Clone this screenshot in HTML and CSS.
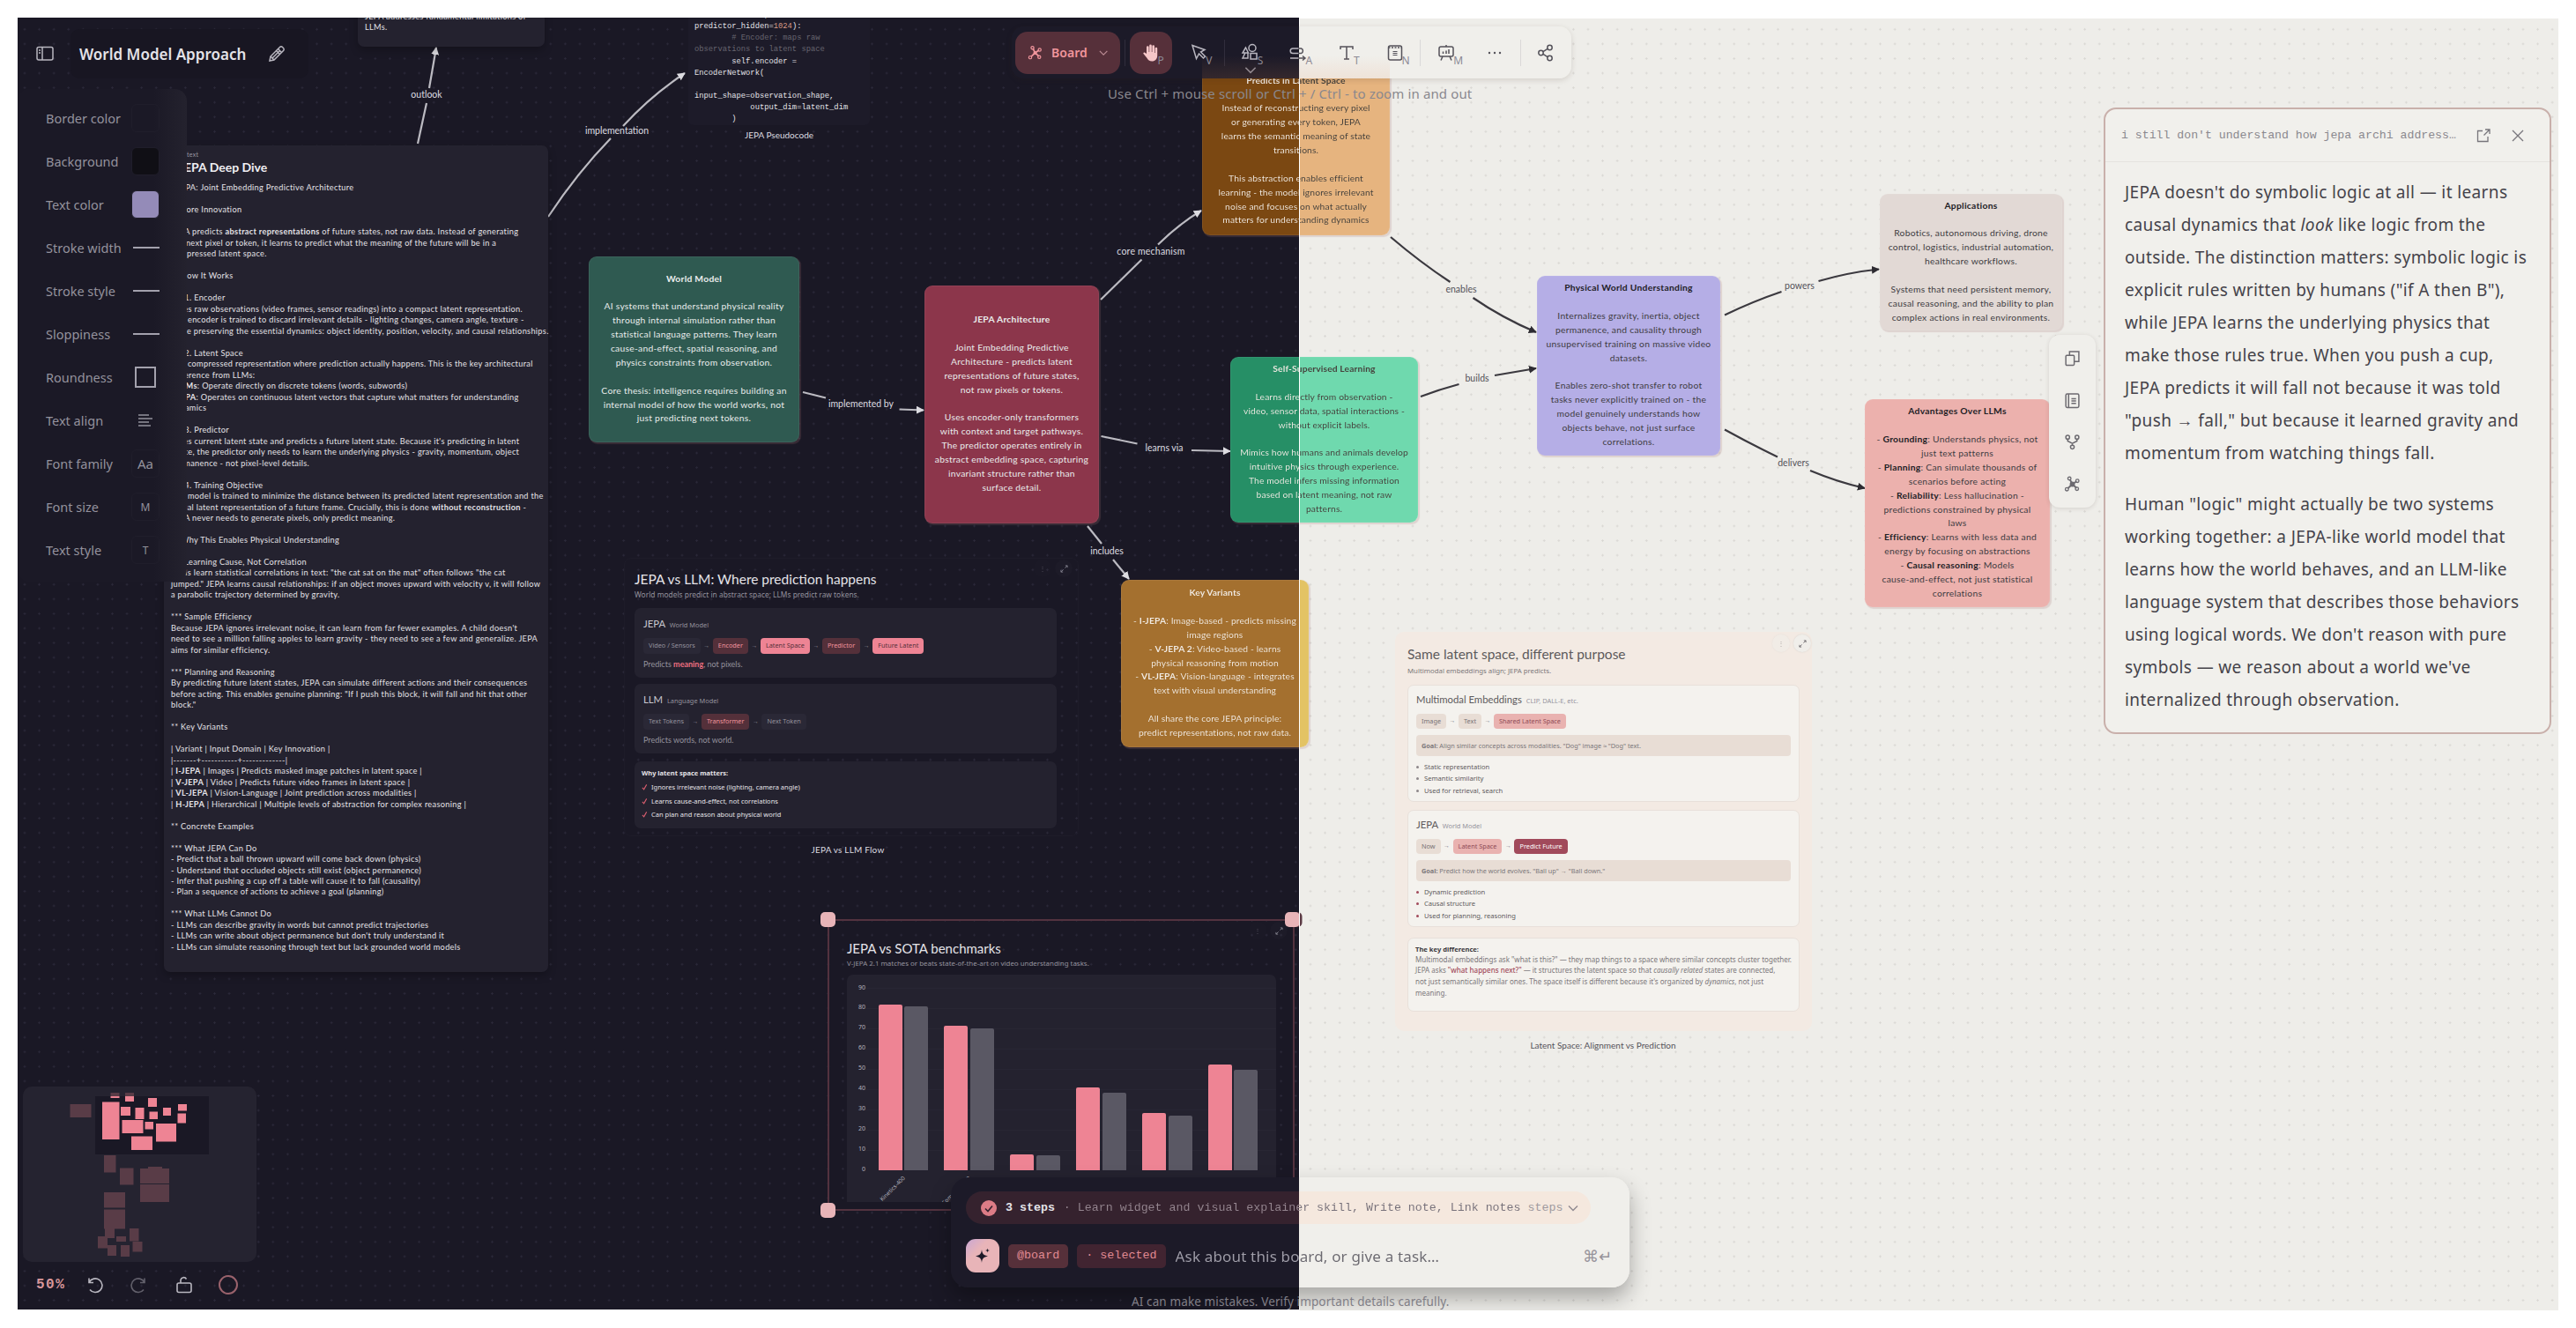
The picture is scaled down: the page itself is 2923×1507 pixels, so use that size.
FILE: index.html
```html
<!DOCTYPE html>
<html lang="en">
<head>
  <meta charset="UTF-8" />
  <meta name="viewport" content="width=device-width, initial-scale=1.0"/>
  <title>World Model Approach</title>
  <link rel="stylesheet" href="styles.css">
</head>
<body>

  <!-- shared icons -->
  <svg class="defs" width="0" height="0">
    <symbol id="i-board" viewBox="0 0 20 20">
      <path d="M10 10 7 4M10 10l5-3.500M10 10l-5.500 5M10 10l5 4.500" fill="none" stroke="currentColor" stroke-width="2"/>
      <circle cx="10" cy="10" r="2.400" fill="currentColor"/>
      <circle cx="6.500" cy="3.200" r="1.900" fill="none" stroke="currentColor" stroke-width="1.400"/>
      <circle cx="16" cy="6" r="1.900" fill="none" stroke="currentColor" stroke-width="1.400"/>
      <circle cx="3.500" cy="16" r="1.900" fill="none" stroke="currentColor" stroke-width="1.400"/>
      <circle cx="15.500" cy="15.500" r="1.900" fill="none" stroke="currentColor" stroke-width="1.400"/>
    </symbol>
    <symbol id="i-chevron" viewBox="0 0 12 8">
      <path d="M1 1.500 6 6.500l5-5" fill="none" stroke="currentColor" stroke-width="1.400"/>
    </symbol>
    <symbol id="i-expand" viewBox="0 0 10 10">
      <path d="M6 4 9 1M6.500 1H9v2.500M4 6 1 9M1 6.500V9h2.500" fill="none" stroke="currentColor" stroke-width="1"/>
    </symbol>
    <symbol id="i-check" viewBox="0 0 8 8">
      <path d="M1 5l2 2.200L6.500 1" fill="none" stroke="currentColor" stroke-width="1.200"/>
    </symbol>
  </svg>

  <div class="canvas">
    <div class="side dark"></div>
    <div class="side light"></div>

    <!-- connectors -->
    <svg class="edges" width="2923" height="1507">
      <defs>
        <marker id="head-d" viewBox="0 0 10 10" refX="9" refY="5" markerWidth="9" markerHeight="9" markerUnits="userSpaceOnUse" orient="auto"><path d="M0 0 10 5 0 10z" fill="#dddce1"/></marker>
        <marker id="head-l" viewBox="0 0 10 10" refX="9" refY="5" markerWidth="9" markerHeight="9" markerUnits="userSpaceOnUse" orient="auto"><path d="M0 0 10 5 0 10z" fill="#2d2b31"/></marker>
      </defs>
      <g class="edge-dark">
        <path d="M474 163 484 117"/>
        <path d="M487 100 495 54" marker-end="url(#head-d)"/>
        <path d="M622 246Q655 196 693 157"/>
        <path d="M707 143Q738 109 777 83" marker-end="url(#head-d)"/>
        <path d="M911 445 937 451.500"/>
        <path d="M1020.500 464.500 1048 465.500" marker-end="url(#head-d)"/>
        <path d="M1249 340 1295.500 294.500"/>
        <path d="M1314 277.500Q1338 254 1363 239" marker-end="url(#head-d)"/>
        <path d="M1249.500 495 1290.500 503.500"/>
        <path d="M1352 511 1396 512" marker-end="url(#head-d)"/>
        <path d="M1234 597 1250 617"/>
        <path d="M1263 635 1281 657" marker-end="url(#head-d)"/>
      </g>
      <g class="edge-light">
        <path d="M1578 269Q1612 298 1645.500 320"/>
        <path d="M1671.500 338Q1705 361 1743 377" marker-end="url(#head-l)"/>
        <path d="M1612 450Q1633 442 1655.500 436"/>
        <path d="M1696 426 1743 418" marker-end="url(#head-l)"/>
        <path d="M1957 357.500Q1989 342 2021.500 331"/>
        <path d="M2063.500 319Q2098 309 2132 305.500" marker-end="url(#head-l)"/>
        <path d="M1957 487.500Q1987 504 2017 518.500"/>
        <path d="M2054 534Q2085 547 2116 554" marker-end="url(#head-l)"/>
      </g>
    </svg>
    <span class="edge-label" id="e-outlook">outlook</span>
    <span class="edge-label" id="e-implementation">implementation</span>
    <span class="edge-label" id="e-implemented">implemented by</span>
    <span class="edge-label" id="e-core">core mechanism</span>
    <span class="edge-label" id="e-learns">learns via</span>
    <span class="edge-label" id="e-includes">includes</span>
    <span class="edge-label ink" id="e-enables">enables</span>
    <span class="edge-label ink" id="e-builds">builds</span>
    <span class="edge-label ink" id="e-powers">powers</span>
    <span class="edge-label ink" id="e-delivers">delivers</span>

    <div class="note" id="n-outlook">JEPA addresses fundamental limitations of<br>LLMs.</div>

    <pre class="code">observation_dim,
predictor_hidden=<i>1024</i>):
        <em># Encoder: maps raw</em>
<em>observations to latent space</em>
        self.encoder =
EncoderNetwork(

input_shape=observation_shape,
            output_dim=latent_dim
        )</pre>
    <span class="caption" id="c-code">JEPA Pseudocode</span>

    <article class="note" id="n-deep">
      <small>text</small>
      <h2>* JEPA Deep Dive</h2>
      <div class="lines">* JEPA: Joint Embedding Predictive Architecture

** Core Innovation

JEPA predicts <b>abstract representations</b> of future states, not raw data. Instead of generating
the next pixel or token, it learns to predict what the meaning of the future will be in a
compressed latent space.

** How It Works

*** 1. Encoder
Takes raw observations (video frames, sensor readings) into a compact latent representation.
The encoder is trained to discard irrelevant details - lighting changes, camera angle, texture -
while preserving the essential dynamics: object identity, position, velocity, and causal relationships.

*** 2. Latent Space
The compressed representation where prediction actually happens. This is the key architectural
difference from LLMs:
- <b>LLMs</b>: Operate directly on discrete tokens (words, subwords)
- <b>JEPA</b>: Operates on continuous latent vectors that capture what matters for understanding
dynamics

*** 3. Predictor
Takes current latent state and predicts a future latent state. Because it's predicting in latent
space, the predictor only needs to learn the underlying physics - gravity, momentum, object
permanence - not pixel-level details.

*** 4. Training Objective
The model is trained to minimize the distance between its predicted latent representation and the
actual latent representation of a future frame. Crucially, this is done <b>without reconstruction</b> -
JEPA never needs to generate pixels, only predict meaning.

** Why This Enables Physical Understanding

*** Learning Cause, Not Correlation
LLMs learn statistical correlations in text: "the cat sat on the mat" often follows "the cat
jumped." JEPA learns causal relationships: if an object moves upward with velocity v, it will follow
a parabolic trajectory determined by gravity.

*** Sample Efficiency
Because JEPA ignores irrelevant noise, it can learn from far fewer examples. A child doesn't
need to see a million falling apples to learn gravity - they need to see a few and generalize. JEPA
aims for similar efficiency.

*** Planning and Reasoning
By predicting future latent states, JEPA can simulate different actions and their consequences
before acting. This enables genuine planning: "If I push this block, it will fall and hit that other
block."

** Key Variants

| Variant | Input Domain | Key Innovation |
|-------+-----------+-------------|
| <b>I-JEPA</b> | Images | Predicts masked image patches in latent space |
| <b>V-JEPA</b> | Video | Predicts future video frames in latent space |
| <b>VL-JEPA</b> | Vision-Language | Joint prediction across modalities |
| <b>H-JEPA</b> | Hierarchical | Multiple levels of abstraction for complex reasoning |

** Concrete Examples

*** What JEPA Can Do
- Predict that a ball thrown upward will come back down (physics)
- Understand that occluded objects still exist (object permanence)
- Infer that pushing a cup off a table will cause it to fall (causality)
- Plan a sequence of actions to achieve a goal (planning)

*** What LLMs Cannot Do
- LLMs can describe gravity in words but cannot predict trajectories
- LLMs can write about object permanence but don't truly understand it
- LLMs can simulate reasoning through text but lack grounded world models</div>
    </article>

    <div class="node" id="n-world"><p><b>World Model</b><br><br>AI systems that understand physical reality<br>through internal simulation rather than<br>statistical language patterns. They learn<br>cause-and-effect, spatial reasoning, and<br>physics constraints from observation.<br><br>Core thesis: intelligence requires building an<br>internal model of how the world works, not<br>just predicting next tokens.</p></div>

    <div class="node" id="n-jepa"><p><b>JEPA Architecture</b><br><br>Joint Embedding Predictive<br>Architecture - predicts latent<br>representations of future states,<br>not raw pixels or tokens.<br><br>Uses encoder-only transformers<br>with context and target pathways.<br>The predictor operates entirely in<br>abstract embedding space, capturing<br>invariant structure rather than<br>surface detail.</p></div>

    <div class="node" id="n-predicts"><p class="split-ink"><b>Predicts in Latent Space</b><br><br>Instead of reconstructing every pixel<br>or generating every token, JEPA<br>learns the semantic meaning of state<br>transitions.<br><br>This abstraction enables efficient<br>learning - the model ignores irrelevant<br>noise and focuses on what actually<br>matters for understanding dynamics</p></div>

    <div class="node" id="n-self"><p class="split-ink"><b>Self-Supervised Learning</b><br><br>Learns directly from observation -<br>video, sensor data, spatial interactions -<br>without explicit labels.<br><br>Mimics how humans and animals develop<br>intuitive physics through experience.<br>The model infers missing information<br>based on latent meaning, not raw<br>patterns.</p></div>

    <div class="node" id="n-variants"><p class="split-ink"><b>Key Variants</b><br><br>- <b>I-JEPA</b>: Image-based - predicts missing<br>image regions<br>- <b>V-JEPA 2</b>: Video-based - learns<br>physical reasoning from motion<br>- <b>VL-JEPA</b>: Vision-language - integrates<br>text with visual understanding<br><br>All share the core JEPA principle:<br>predict representations, not raw data.</p></div>

    <div class="node ink" id="n-physical"><p><b>Physical World Understanding</b><br><br>Internalizes gravity, inertia, object<br>permanence, and causality through<br>unsupervised training on massive video<br>datasets.<br><br>Enables zero-shot transfer to robot<br>tasks never explicitly trained on - the<br>model genuinely understands how<br>objects behave, not just surface<br>correlations.</p></div>

    <div class="node ink" id="n-apps"><p><b>Applications</b><br><br>Robotics, autonomous driving, drone<br>control, logistics, industrial automation,<br>healthcare workflows.<br><br>Systems that need persistent memory,<br>causal reasoning, and the ability to plan<br>complex actions in real environments.</p></div>

    <div class="node ink" id="n-adv"><p><b>Advantages Over LLMs</b><br><br>- <b>Grounding</b>: Understands physics, not<br>just text patterns<br>- <b>Planning</b>: Can simulate thousands of<br>scenarios before acting<br>- <b>Reliability</b>: Less hallucination -<br>predictions constrained by physical<br>laws<br>- <b>Efficiency</b>: Learns with less data and<br>energy by focusing on abstractions<br>- <b>Causal reasoning</b>: Models<br>cause-and-effect, not just statistical<br>correlations</p></div>

    <!-- JEPA vs LLM widget -->
    <section class="widget" id="w-llm">
      <div class="widget-tools"><span>⋮</span><span><svg><use href="#i-expand"/></svg></span></div>
      <h3>JEPA vs LLM: Where prediction happens</h3>
      <p class="sub">World models predict in abstract space; LLMs predict raw tokens.</p>
      <div class="box">
        <h4>JEPA <small>World Model</small></h4>
        <div class="chips"><span class="chip">Video / Sensors</span><i>→</i><span class="chip warm">Encoder</span><i>→</i><span class="chip hot">Latent Space</span><i>→</i><span class="chip warm">Predictor</span><i>→</i><span class="chip hot">Future Latent</span></div>
        <p class="says">Predicts <b>meaning</b>, not pixels.</p>
      </div>
      <div class="box">
        <h4>LLM <small>Language Model</small></h4>
        <div class="chips"><span class="chip">Text Tokens</span><i>→</i><span class="chip warm">Transformer</span><i>→</i><span class="chip">Next Token</span></div>
        <p class="says">Predicts words, not world.</p>
      </div>
      <div class="box why">
        <strong>Why latent space matters:</strong>
        <ul>
          <li><svg><use href="#i-check"/></svg>Ignores irrelevant noise (lighting, camera angle)</li>
          <li><svg><use href="#i-check"/></svg>Learns cause-and-effect, not correlations</li>
          <li><svg><use href="#i-check"/></svg>Can plan and reason about physical world</li>
        </ul>
      </div>
    </section>
    <span class="caption" id="c-llm">JEPA vs LLM Flow</span>

    <!-- latent space widget -->
    <section class="widget pale" id="w-latent">
      <div class="widget-tools"><span>⋮</span><span><svg><use href="#i-expand"/></svg></span></div>
      <h3>Same latent space, different purpose</h3>
      <p class="sub">Multimodal embeddings align; JEPA predicts.</p>
      <div class="box">
        <h4>Multimodal Embeddings <small>CLIP, DALL-E, etc.</small></h4>
        <div class="chips"><span class="chip">Image</span><i>→</i><span class="chip">Text</span><i>→</i><span class="chip pink">Shared Latent Space</span></div>
        <p class="goal"><b>Goal:</b> Align similar concepts across modalities. "Dog" image ≈ "Dog" text.</p>
        <ul><li>Static representation</li><li>Semantic similarity</li><li>Used for retrieval, search</li></ul>
      </div>
      <div class="box second">
        <h4>JEPA <small>World Model</small></h4>
        <div class="chips"><span class="chip">Now</span><i>→</i><span class="chip pink">Latent Space</span><i>→</i><span class="chip wine">Predict Future</span></div>
        <p class="goal"><b>Goal:</b> Predict how the world evolves. "Ball up" → "Ball down."</p>
        <ul><li>Dynamic prediction</li><li>Causal structure</li><li>Used for planning, reasoning</li></ul>
      </div>
      <div class="box key">
        <strong>The key difference:</strong>
        <p>Multimodal embeddings ask "what is this?" — they map things to a space where similar concepts cluster together.<br>JEPA asks <b>"what happens next?"</b> — it structures the latent space so that <em>causally related</em> states are connected,<br>not just semantically similar ones. The space itself is different because it's organized by <em>dynamics</em>, not just<br>meaning.</p>
      </div>
    </section>
    <span class="caption ink" id="c-latent">Latent Space: Alignment vs Prediction</span>

    <!-- benchmark chart -->
    <section class="chart">
      <div class="widget-tools"><span>⋮</span><span><svg><use href="#i-expand"/></svg></span></div>
      <h3>JEPA vs SOTA benchmarks</h3>
      <p class="sub">V-JEPA 2.1 matches or beats state-of-the-art on video understanding tasks.</p>
      <div class="plot">
        <div class="axis"><span>90</span><span>80</span><span>70</span><span>60</span><span>50</span><span>40</span><span>30</span><span>20</span><span>10</span><span>0</span></div>
        <div class="bars">
          <div class="pair"><i style="height:188px"></i><i style="height:186px"></i><em>Kinetics-400</em></div>
          <div class="pair"><i style="height:164px"></i><i style="height:161px"></i><em>Something-v2</em></div>
          <div class="pair"><i style="height:18px"></i><i style="height:17px"></i></div>
          <div class="pair"><i style="height:94px"></i><i style="height:88px"></i></div>
          <div class="pair"><i style="height:65px"></i><i style="height:62px"></i></div>
          <div class="pair"><i style="height:120px"></i><i style="height:114px"></i></div>
        </div>
      </div>
      <b class="handle tl"></b><b class="handle tr"></b><b class="handle bl"></b>
    </section>
    <div class="seam"></div>

    <!-- title bar -->
    <header class="titlebar">
      <svg width="20" height="18" viewBox="0 0 20 18" fill="none" stroke="currentColor" stroke-width="1.500"><rect x="1" y="1.500" width="18" height="14.500" rx="2"/><path d="M7 1.500V16"/><path d="M3 5h2M3 8h2"/></svg>
      <div class="board-name">
        <h1>World Model Approach</h1>
        <svg width="20" height="20" viewBox="0 0 20 20" fill="none" stroke="currentColor" stroke-width="1.500"><path d="M2 18l1-5L13.500 2.500a2 2 0 0 1 3 0l1 1a2 2 0 0 1 0 3L7 17z"/><path d="M11.500 4.500l4 4M9.500 6.500l4 4M4.500 15.500l8.500-8.500M3 13l4 4"/></svg>
      </div>
    </header>

    <!-- style panel -->
    <aside class="props">
      <div><span>Border color</span><i class="swatch"></i></div>
      <div><span>Background</span><i class="swatch black"></i></div>
      <div><span>Text color</span><i class="swatch lilac"></i></div>
      <div><span>Stroke width</span><i class="line"></i></div>
      <div><span>Stroke style</span><i class="line"></i></div>
      <div><span>Sloppiness</span><i class="line"></i></div>
      <div><span>Roundness</span><i class="square"></i></div>
      <div><span>Text align</span><svg width="32" height="16" viewBox="0 0 32 16" stroke="currentColor" stroke-width="1.400"><path d="M8 2h12M8 6h16M8 10h12M8 14h14"/></svg></div>
      <div><span>Font family</span><i class="swatch big">Aa</i></div>
      <div><span>Font size</span><i class="swatch">M</i></div>
      <div><span>Text style</span><i class="swatch">T</i></div>
    </aside>

    <!-- tool bar -->
    <nav class="toolbar">
      <button class="mode"><svg width="20" height="20"><use href="#i-board"/></svg>Board<svg width="12" height="8"><use href="#i-chevron"/></svg></button>
      <hr>
      <button class="tool active"><svg width="24" height="24" viewBox="0 0 24 24" fill="#f6c6c8"><path d="M7 13V5.500a1.300 1.300 0 0 1 2.600 0V11h.6V3.800a1.300 1.300 0 0 1 2.600 0V11h.6V4.500a1.300 1.300 0 0 1 2.600 0V12h.6V7a1.300 1.300 0 0 1 2.600 0v8c0 4-2.500 6.500-6 6.500-3 0-4.500-1.500-6-4L3.500 13c-.7-1.200.8-2.200 1.700-1.200z"/></svg><sub>P</sub></button>
      <button class="tool"><svg width="22" height="22" viewBox="0 0 22 22"><path d="M4 2.500l4.500 15 3-5.500 5 5 2-2-5-5 4.500-2.500z"/></svg><sub>V</sub></button>
      <hr>
      <button class="tool"><svg width="22" height="22" viewBox="0 0 22 22"><circle cx="13" cy="5.500" r="4"/><path d="M5.500 5 2 11h6.500zM5 11l-3 6h6V11"/><rect x="11" y="11.500" width="7" height="6.500"/></svg><sub>S</sub><svg class="more" width="14" height="9"><use href="#i-chevron"/></svg></button>
      <button class="tool"><svg width="24" height="22" viewBox="0 0 24 22"><path d="M12.500 6H6a2.800 2.800 0 0 0 0 5.600h6.500M3 17h9.500"/><path d="M12.500 6h3.500M12.500 11.600h3a3 3 0 0 0 0-5.600M12.500 17h7M17 14.500l3 2.500-3 2.500" stroke="#54525a"/></svg><sub>A</sub></button>
      <button class="tool lt"><svg width="20" height="20" viewBox="0 0 20 20"><path d="M3 6V3h14v3M10 3v14M7 17h6"/></svg><sub>T</sub></button>
      <button class="tool lt"><svg width="20" height="22" viewBox="0 0 20 22"><rect x="2.500" y="3" width="15" height="16" rx="2"/><path d="M2.500 5h15" stroke-dasharray="2 1.500"/><path d="M7.500 9.500h5M7.500 11.500h5M7.500 13.500h5" stroke-width="1"/></svg><sub>N</sub></button>
      <hr>
      <button class="tool lt"><svg width="22" height="22" viewBox="0 0 22 22"><rect x="3" y="4" width="16" height="11" rx="2"/><path d="M11 4V2M7.500 12V9.500M11 12V8.500M14 12V7M7 15l-2 4.500M15 15l2 4.500"/></svg><sub>M</sub></button>
      <button class="tool lt"><svg width="18" height="4" viewBox="0 0 18 4"><g fill="#54525a" stroke="none"><circle cx="3" cy="2" r="1.200"/><circle cx="9" cy="2" r="1.200"/><circle cx="15" cy="2" r="1.200"/></g></svg></button>
      <hr>
      <button class="tool lt"><svg width="20" height="20" viewBox="0 0 20 20"><circle cx="4.500" cy="10" r="2.700"/><circle cx="14.500" cy="4" r="2.700"/><circle cx="14.500" cy="16" r="2.700"/><path d="M7 8.600l5-3.200M7 11.400l5 3.200"/></svg></button>
    </nav>
    <p class="hint">Use Ctrl + mouse scroll or Ctrl + / Ctrl - to zoom in and out</p>

    <!-- node actions -->
    <div class="actions">
      <svg viewBox="0 0 18 18"><rect x="2" y="6" width="9" height="10.500" rx="1"/><path d="M6 6V2h10v10.500h-5"/></svg>
      <svg viewBox="0 0 18 18"><rect x="2" y="2" width="14" height="14.500" rx="1.500"/><path d="M5 2v14.500"/><path d="M8 7h5M8 9.500h5M8 12h5"/></svg>
      <svg viewBox="0 0 18 18"><circle cx="4" cy="4" r="2"/><circle cx="14" cy="4" r="2"/><circle cx="9" cy="14.500" r="2"/><path d="M4 6v2l5 2.500L14 8V6M9 10.500v2"/></svg>
      <svg><use href="#i-board"/></svg>
    </div>

    <!-- chat reply -->
    <section class="reply">
      <header>
        <span>i still don't understand how jepa archi address…</span>
        <svg width="18" height="18" viewBox="0 0 18 18"><path d="M8 3.500H2.500v12H14V10M11 2h5v5M16 2 9.500 8.500"/></svg>
        <svg width="14" height="14" viewBox="0 0 14 14"><path d="M1 1l12 12M13 1 1 13"/></svg>
      </header>
      <p>JEPA doesn't do symbolic logic at all — it learns<br>causal dynamics that <em>look</em> like logic from the<br>outside. The distinction matters: symbolic logic is<br>explicit rules written by humans ("if A then B"),<br>while JEPA learns the underlying physics that<br>make those rules true. When you push a cup,<br>JEPA predicts it will fall not because it was told<br>"push → fall," but because it learned gravity and<br>momentum from watching things fall.</p>
      <p>Human "logic" might actually be two systems<br>working together: a JEPA-like world model that<br>learns how the world behaves, and an LLM-like<br>language system that describes those behaviors<br>using logical words. We don't reason with pure<br>symbols — we reason about a world we've<br>internalized through observation.</p>
    </section>

    <!-- minimap -->
    <svg class="minimap" width="265" height="199" viewBox="26 1233 265 199">
      <rect class="view" x="108" y="1244" width="129" height="66"/>
      <g class="off">
        <rect x="79.500" y="1253" width="24" height="15"/><rect x="125.500" y="1240" width="10" height="4"/><rect x="142" y="1240" width="10" height="4"/>
        <rect x="118" y="1311" width="13.500" height="19.500"/><rect x="136" y="1325.500" width="15.500" height="19"/>
        <rect x="159" y="1326" width="33" height="17"/><rect x="168" y="1324" width="16" height="2"/><rect x="159" y="1344" width="33" height="20"/>
        <rect x="118" y="1353" width="24" height="17.500"/><rect x="118" y="1372.500" width="24" height="22"/><rect x="119" y="1394" width="11" height="11"/>
        <rect x="111" y="1403" width="11" height="13.500"/><rect x="122" y="1413" width="10" height="12"/><rect x="132" y="1403" width="11" height="6"/>
        <rect x="137" y="1413" width="10" height="13"/><rect x="147" y="1394" width="10.500" height="14.500"/><rect x="150.500" y="1409" width="11" height="11.500"/>
      </g>
      <g class="on">
        <rect x="125.500" y="1244" width="10" height="2"/><rect x="142" y="1244" width="10" height="6"/>
        <rect x="116" y="1250.500" width="19.500" height="42.500"/><rect x="137" y="1256" width="11" height="10"/><rect x="153.500" y="1257" width="10" height="13"/>
        <rect x="168" y="1246" width="10" height="10"/><rect x="185" y="1257" width="9" height="9"/><rect x="202" y="1253" width="10" height="7.500"/>
        <rect x="169.500" y="1261.500" width="9.500" height="8.500"/><rect x="201.500" y="1263.500" width="9.500" height="11"/><rect x="138.500" y="1271" width="24" height="15"/>
        <rect x="164.500" y="1273" width="9.500" height="8.500"/><rect x="177" y="1275" width="23" height="20.500"/><rect x="149" y="1289.500" width="24" height="15.500"/>
      </g>
    </svg>

    <footer class="status">
      <b>50%</b>
      <svg viewBox="0 0 20 20"><path d="M4 2.500v5h5M4.200 7.200A7.800 7.800 0 1 1 5 15.500"/></svg>
      <svg class="faint" viewBox="0 0 20 20"><path d="M16 2.500v5h-5M15.800 7.200A7.800 7.800 0 1 0 15 15.500"/></svg>
      <svg viewBox="0 0 20 20"><rect x="2" y="8" width="16" height="10.500" rx="2"/><path d="M6 8V4.500a3.500 3.500 0 0 1 6.500-1"/></svg>
      <i></i>
    </footer>

    <!-- prompt -->
    <form class="composer">
      <div class="steps">
        <svg width="18" height="18" viewBox="0 0 18 18"><circle cx="9" cy="9" r="9" fill="#dc7c86"/><path d="M5 9.500l3 3 5-6" fill="none" stroke="#35222e" stroke-width="1.600"/></svg>
        <b>3 steps</b><span class="split-soft">· Learn widget and visual explainer skill, Write note, Link notes</span><span class="last">steps</span>
        <svg class="chev" width="12" height="8"><use href="#i-chevron"/></svg>
      </div>
      <div class="ask">
        <span class="spark"><svg width="20" height="20" viewBox="0 0 20 20" fill="#1c1a28"><path d="M9 3c.6 5 2 6.500 7 7.500-5 1-6.400 2.500-7 7.500-.6-5-2-6.500-7-7.500 5-1 6.400-2.500 7-7.500z"/><path d="M15.500 1.500c.2 1.800.7 2.300 2.500 2.500-1.800.2-2.300.7-2.500 2.500-.2-1.800-.7-2.300-2.500-2.500 1.800-.2 2.300-.7 2.500-2.500z"/></svg></span>
        <span class="tag">@board</span><span class="tag dim">· selected</span>
        <span class="prompt">Ask about this board, or give a task…</span>
        <span class="keys">⌘↵</span>
      </div>
    </form>
    <p class="disclaimer">AI can make mistakes. Verify important details carefully.</p>
  </div>

</body>
</html>
```
FILE: styles.css
```css
:root {
  --hand: "Lato", sans-serif;
  --ui: "Noto Sans", sans-serif;
  --mono: "Liberation Mono", monospace;
  --dark: #1a1825;
  --dark-card: #24222f;
  --light: #eeede9;
  --split: 1474.5px;
}

* {
  box-sizing: border-box;
}

body {
  margin: 0;
  background: #fff;
  font-family: var(--ui);
  color: #e4e3e8;
}

h1, h2, h3, h4, p, ul, pre {
  margin: 0;
  padding: 0;
  font-weight: 400;
}

ul {
  list-style: none;
}

i {
  font-style: normal;
}

.defs {
  position: absolute;
}

.canvas {
  position: relative;
  width: 2923px;
  height: 1507px;
  overflow: hidden;
  clip-path: inset(20px 20px 20px 20px);
}

.side {
  position: absolute;
  background-size: 16.58px 16.58px;
}

.side.dark {
  left: 20px;
  top: 20px;
  width: 1454px;
  height: 1466px;
  background-color: var(--dark);
  background-image: radial-gradient(circle, #2b293a 0.9px, transparent 1.4px);
  background-position: -0.3px 5px;
}

.side.light {
  left: 1475px;
  top: 21px;
  width: 1428px;
  height: 1466px;
  background-color: var(--light);
  background-image: radial-gradient(circle, #d9d7d3 0.9px, transparent 1.4px);
  background-position: 3.7px 4px;
}

.seam {
  position: absolute;
  left: 1474px;
  top: 20px;
  width: 1px;
  height: 1467px;
  background: #fff;
}

/* connectors */
.edges {
  position: absolute;
  left: 0;
  top: 0;
  fill: none;
  stroke-width: 2.2;
}

.edge-dark {
  stroke: #bcbbc2;
}

.edge-light {
  stroke: #3b393f;
}

.edge-label,
.caption {
  position: absolute;
  width: 200px;
  margin-left: -100px;
  margin-top: -9px;
  text-align: center;
  font-family: var(--hand);
  font-size: 10.5px;
  line-height: 16px;
  color: #dddce1;
}

.edge-label.ink,
.caption.ink {
  color: #55535a;
}

.caption {
  font-size: 10px;
}

#e-outlook { left: 484px; top: 108px; }
#e-implementation { left: 700px; top: 149px; }
#e-implemented { left: 977px; top: 459px; }
#e-core { left: 1306px; top: 286px; letter-spacing: 0.2px; }
#e-learns { left: 1321px; top: 509px; }
#e-includes { left: 1256px; top: 626px; }
#e-enables { left: 1658px; top: 329px; }
#e-builds { left: 1676px; top: 430px; }
#e-powers { left: 2042px; top: 325px; }
#e-delivers { left: 2035px; top: 526px; }
#c-code { left: 884px; top: 154px; }
#c-llm { left: 962px; top: 965px; letter-spacing: 0.2px; }
#c-latent { left: 1819px; top: 1187px; }

/* notes */
.note {
  position: absolute;
  background: var(--dark-card);
  border-radius: 7px;
  font-family: var(--hand);
  font-size: 9.2px;
  line-height: 12.49px;
  letter-spacing: 0.32px;
  box-shadow: 0 4px 10px rgba(0, 0, 0, 0.25);
  white-space: nowrap;
}

#n-outlook {
  left: 406px;
  top: 0;
  width: 212px;
  height: 53px;
  padding: 13px 8px;
}

#n-deep {
  left: 186px;
  top: 165px;
  width: 436px;
  height: 938px;
  padding: 4px 8px;
}

#n-deep small {
  display: block;
  padding-left: 18px;
  font-size: 7px;
  color: #9b99a4;
}

#n-deep h2 {
  font-size: 14px;
  line-height: 18px;
  letter-spacing: 0;
  font-weight: 700;
  margin-bottom: 8px;
  color: #f0eff3;
}

#n-deep .lines {
  white-space: pre;
}

.code {
  position: absolute;
  left: 781px;
  top: 0;
  width: 206px;
  height: 142px;
  padding: 11px 7px;
  background: #1d1b29;
  border-radius: 6px;
  font-family: var(--mono);
  font-size: 8.8px;
  line-height: 13.15px;
  overflow: hidden;
}

.code em {
  font-style: normal;
  color: #67656f;
}

.code i {
  color: #d89a86;
}

.node {
  position: absolute;
  display: flex;
  align-items: center;
  justify-content: center;
  border-radius: 9px;
  border: 1px solid rgba(255, 255, 255, 0.06);
  box-shadow: 1.5px 1.5px 1px rgba(170, 120, 120, 0.22);
  padding-bottom: 1px;
  font-family: var(--hand);
  font-size: 10.3px;
  line-height: 15.87px;
  letter-spacing: 0.27px;
  text-align: center;
  white-space: nowrap;
  color: #e9ecec;
}

.node.ink {
  color: #403c42;
}

.node.ink b {
  color: #232126;
}

/* two-tone surfaces follow the page split */
.split-ink {
  letter-spacing: 0.12px;
  background: linear-gradient(90deg, #f1ebe4 var(--split), #45413c var(--split)) fixed;
  -webkit-background-clip: text;
  background-clip: text;
  color: transparent;
}

#n-world { left: 668px; top: 291px; width: 239px; height: 211px; background: #2f5a51; }
#n-jepa { left: 1049px; top: 324px; width: 198px; height: 270px; background: #8c364b; }
#n-predicts { left: 1364px; top: 76px; width: 213px; height: 191px; background: linear-gradient(90deg, #7b4812 var(--split), #e6b47f var(--split)) fixed; }
#n-self { left: 1396px; top: 405px; width: 213px; height: 188px; background: linear-gradient(90deg, #268f66 var(--split), #6fd9ae var(--split)) fixed; }
#n-variants { left: 1272px; top: 658px; width: 213px; height: 190px; background: linear-gradient(90deg, #a4702f var(--split), #e3c364 var(--split)) fixed; }
#n-physical { left: 1744px; top: 313px; width: 208px; height: 204px; background: #b5aee6; }
#n-apps { left: 2133px; top: 220px; width: 207px; height: 155px; background: #e2d9d5; }
#n-adv { left: 2116px; top: 453px; width: 210px; height: 236px; background: #ecb1ad; }

/* widgets */
.widget,
.chart {
  position: absolute;
  font-size: 7.6px;
  line-height: 10px;
}

.widget h3,
.chart h3 {
  font-family: var(--hand);
  font-size: 15.5px;
  line-height: 20px;
}

.chart h3 {
  font-size: 15px;
}

.sub {
  font-size: 7.9px;
  color: #94929d;
}

.widget-tools {
  position: absolute;
  right: 6px;
  top: 1px;
  display: flex;
  gap: 4px;
  color: #85838e;
}

.widget-tools span {
  width: 20px;
  height: 20px;
  display: flex;
  align-items: center;
  justify-content: center;
  border-radius: 50%;
  background: rgba(255, 255, 255, 0.015);
}

.widget-tools span:first-child {
  opacity: 0.5;
}

.widget-tools svg {
  width: 9px;
  height: 9px;
}

#w-llm {
  left: 708px;
  top: 633px;
  width: 516px;
  height: 316px;
  padding: 13px 24px 8px 11px;
  border: 1px solid #1e1c29;
  border-radius: 8px;
}

#w-llm .sub {
  margin: 3px 0 10px;
  font-size: 8.4px;
}

.box {
  background: var(--dark-card);
  border-radius: 7px;
  padding: 10px;
}

#w-llm .box {
  height: 79px;
  margin-bottom: 7px;
}

#w-llm .why {
  height: 76px;
  margin-top: 9px;
  padding: 8px;
  font-size: 7.5px;
}

.box h4 {
  font-family: var(--hand);
  font-size: 11.3px;
  line-height: 16px;
  color: #c9c8cf;
}

.box h4 small {
  margin-left: 2px;
  font-family: var(--ui);
  font-size: 7.4px;
  color: #94929d;
}

.chips {
  display: flex;
  align-items: center;
  margin-top: 7px;
}

.chips i {
  width: 14px;
  text-align: center;
  color: #85838e;
  font-size: 7px;
}

.chip {
  height: 17.5px;
  padding: 0 6px;
  line-height: 17px;
  border-radius: 4px;
  background: #2a2836;
  color: #94929d;
  font-size: 7.3px;
}

.chip.warm {
  background: #54303a;
  color: #f0949d;
}

.chip.hot {
  background: #ee8494;
  color: #55303a;
}

.says {
  margin-top: 7px;
  font-family: var(--hand);
  font-size: 9px;
  color: #94929d;
}

.says b {
  color: #ee6f80;
}

.why li {
  display: flex;
  align-items: center;
  gap: 4px;
  margin-top: 5.6px;
}

.why ul {
  margin-top: 6px;
}

.why svg {
  width: 7px;
  height: 8px;
  color: #dc5f70;
}

.pale {
  background: #f3eae3;
  border-radius: 10px;
  color: #5d5a5c;
}

#w-latent {
  left: 1583px;
  top: 717px;
  width: 473px;
  height: 453px;
  padding: 15px 14px;
}

.pale .widget-tools {
  right: 1px;
  top: 3px;
}

.pale .widget-tools span {
  background: #f0eeea;
  box-shadow: 0 0 2px #d5d1cc;
  color: #6c696d;
}

.pale .sub {
  color: #7b777a;
  margin: 3.5px 0 11px;
  font-size: 7.8px;
}

.pale .box {
  background: #f4f2ee;
  border: 1px solid #e8e0da;
  height: 133px;
  padding: 8px 9px;
  margin-bottom: 9px;
}

.pale .box h4 {
  color: #5d5a5c;
}

.pale .chip {
  background: #e8ddd5;
  color: #777073;
}

.pale .chip.pink {
  background: #e9b2b0;
  color: #8e4a55;
}

.pale .chip.wine {
  background: #a14a5b;
  color: #fff;
}

.goal {
  height: 24px;
  margin: 7px 0;
  padding: 0 6px;
  line-height: 24px;
  border-radius: 4px;
  background: #e8ddd5;
  color: #7b777a;
  font-size: 7.3px;
}

.pale li {
  height: 13.4px;
  line-height: 11px;
  display: flex;
}

.pale li::before {
  content: "";
  width: 3px;
  height: 3px;
  margin: 4px 6px 0 0;
  border-radius: 50%;
  background: #8d878a;
}

.pale .second li::before {
  background: #a14a5b;
}

.pale .key {
  height: 84px;
  margin-top: 12px;
  padding: 7px 8px;
}

.key strong {
  color: #3c3a3e;
}

.key p {
  margin-top: 1px;
  font-size: 8.02px;
  line-height: 12.9px;
  white-space: nowrap;
  color: #7b777a;
}

.key b {
  color: #a14a5b;
  font-weight: 500;
}

/* chart */
.chart {
  left: 939px;
  top: 1043px;
  width: 530px;
  height: 331px;
  padding: 21px 19px 0 20px;
  border: 2px solid #53323f;
}

.chart .sub {
  margin: 2px 0 8px;
}

.plot {
  height: 258px;
  display: flex;
  border-radius: 7px 7px 0 0;
  background: var(--dark-card);
  overflow: hidden;
}

.axis {
  width: 21px;
  padding-top: 3.5px;
  text-align: right;
}

.axis span {
  display: block;
  height: 22.9px;
  line-height: 22.9px;
  font-size: 7px;
  color: #b4b2bc;
}

.bars {
  flex: 1;
  height: 222px;
  padding-left: 14.5px;
  display: flex;
  background: repeating-linear-gradient(transparent 0 15.5px, #282634 15.5px 16.5px, transparent 16.5px 22.9px);
}

.pair {
  position: relative;
  width: 74.9px;
  display: flex;
  align-items: flex-end;
  gap: 2.5px;
}

.pair i {
  width: 27px;
  border-radius: 2px 2px 0 0;
  background: #5a5864;
}

.pair i:first-child {
  background: #ee8494;
}

.pair em {
  position: absolute;
  right: 46px;
  top: 226px;
  font-style: normal;
  font-size: 6.5px;
  line-height: 8px;
  color: #b4b2bc;
  white-space: nowrap;
  transform: rotate(-45deg);
  transform-origin: 100% 50%;
}

.handle {
  position: absolute;
  width: 17px;
  height: 17px;
  border-radius: 5px;
  background: #e8b4b8;
}

.handle.tl { left: -10px; top: -10px; }
.handle.tr { right: -8px; top: -10px; box-shadow: 2.5px 0 0 #5b3a44; }
.handle.bl { left: -10px; bottom: -10px; }

/* title bar */
.titlebar {
  position: absolute;
  left: 41px;
  top: 33px;
  height: 56px;
  display: flex;
  align-items: center;
  gap: 19px;
  color: #b9b7c0;
}

.board-name {
  width: 270px;
  height: 56px;
  padding: 0 26px 0 10px;
  display: flex;
  align-items: center;
  justify-content: space-between;
  border-radius: 10px;
  background: #181622;
}

.board-name h1 {
  font-size: 17px;
  font-weight: 600;
  color: #e4e3e8;
  white-space: nowrap;
}

.props {
  position: absolute;
  left: 20px;
  top: 101px;
  width: 192px;
  height: 559px;
  padding: 8px 31px 0 32px;
  border-radius: 14px;
  background: linear-gradient(90deg, #1b1926 80%, #24222e);
  font-size: 14.5px;
  color: #94929d;
}

.props div {
  height: 49.1px;
  display: flex;
  align-items: center;
  justify-content: space-between;
  white-space: nowrap;
}

.swatch {
  width: 32px;
  height: 32px;
  display: flex;
  align-items: center;
  justify-content: center;
  border: 1px solid #201e2b;
  border-radius: 6px;
  font-size: 12px;
}

.swatch.big {
  font-size: 15px;
}

.swatch.black {
  background: #100f15;
}

.swatch.lilac {
  background: #948bb8;
}

.line {
  width: 30px;
  height: 2px;
  background: #a3a1ad;
}

.square {
  width: 24px;
  height: 24px;
  margin-right: 4px;
  border: 2px solid #a3a1ad;
}

/* tool bar */
.toolbar {
  position: absolute;
  left: 1148px;
  top: 30px;
  width: 635px;
  height: 59px;
  padding: 0 4px;
  display: flex;
  align-items: center;
  border-radius: 14px;
  background: linear-gradient(90deg, #1c1a28 var(--split), #f0efeb var(--split)) fixed;
  box-shadow: 0 2px 6px rgba(60, 40, 30, 0.15);
}

.toolbar::after {
  content: "";
  position: absolute;
  left: 216px;
  bottom: 0;
  width: 213px;
  height: 26px;
  background: linear-gradient(transparent, rgba(230, 140, 80, 0.12));
}

.toolbar hr {
  width: 1px;
  height: 30px;
  margin: 0 4.8px;
  border: 0;
  background: rgba(130, 125, 140, 0.2);
}

.toolbar button {
  height: 48px;
  border: 0;
  background: none;
  border-radius: 14px;
  font-family: var(--ui);
}

.mode {
  width: 119px;
  padding: 0 14px;
  display: flex;
  align-items: center;
  gap: 10px;
  font-size: 14px;
  font-weight: 600;
  color: #f0959c;
}

.toolbar .mode,
.toolbar .active {
  background: #56303a;
}

.mode svg:last-child {
  margin-left: 3px;
  color: #b98a92;
}

.tool {
  position: relative;
  width: 48px;
  padding: 0;
  display: flex;
  align-items: center;
  justify-content: center;
  fill: none;
  stroke: #b9b7c0;
  stroke-width: 1.5;
  color: #8b8995;
}

.tool + .tool {
  margin-left: 6.6px;
}

.active svg {
  stroke: none;
}

.tool.lt {
  stroke: #54525a;
}

.tool sub {
  position: absolute;
  left: 32px;
  top: 25px;
  font-size: 12px;
  line-height: 16px;
}

.tool .more {
  position: absolute;
  left: 17px;
  top: 39px;
}

.hint {
  position: absolute;
  left: 1257px;
  top: 96px;
  font-size: 15px;
  line-height: 20px;
  letter-spacing: 0.13px;
  white-space: nowrap;
  color: #8a888e;
}

.actions {
  position: absolute;
  left: 2325px;
  top: 380px;
  width: 53px;
  height: 196px;
  padding: 17px 0;
  display: flex;
  flex-direction: column;
  align-items: center;
  justify-content: space-between;
  border-radius: 12px;
  background: #f0efeb;
  box-shadow: 0 1px 5px rgba(60, 50, 40, 0.15);
}

.actions svg {
  width: 19px;
  height: 19px;
  fill: none;
  stroke: #6c6a70;
  stroke-width: 1.4;
  color: #6c6a70;
}

/* reply */
.reply {
  position: absolute;
  left: 2387px;
  top: 122px;
  width: 508px;
  height: 711px;
  border: 2.5px solid #c9b0ab;
  border-radius: 14px;
  background: #f1f0ec;
  color: #45434a;
  font-size: 19px;
  line-height: 37px;
  letter-spacing: 0.37px;
}

.reply header {
  height: 60px;
  padding: 0 29px 0 18px;
  display: flex;
  align-items: center;
  justify-content: space-between;
  border-bottom: 1px solid #e6e4e0;
  font-family: var(--mono);
  font-size: 13.2px;
  letter-spacing: 0;
  color: #8a888e;
  white-space: nowrap;
}

.reply svg {
  fill: none;
  stroke: #77757b;
  stroke-width: 1.3;
}

.reply p {
  margin: 16px 0 0 22px;
  white-space: nowrap;
}

.reply p + p {
  margin-top: 21px;
}

/* minimap and status */
.minimap {
  position: absolute;
  left: 26px;
  top: 1233px;
  border-radius: 10px;
  background: #252330;
}

.view { fill: var(--dark); }
.off { fill: #593c47; }
.on { fill: #ee8494; }

.status {
  position: absolute;
  left: 41px;
  top: 1447px;
  height: 22px;
  display: flex;
  align-items: center;
}

.status b {
  width: 56px;
  font-family: var(--mono);
  font-size: 16px;
  letter-spacing: 1.5px;
  color: #d9979b;
}

.status svg {
  width: 20px;
  height: 20px;
  margin-right: 31px;
  fill: none;
  stroke: #b9b7c0;
  stroke-width: 1.6;
}

.status .faint {
  opacity: 0.45;
}

.status i {
  width: 22px;
  height: 22px;
  margin-left: -2px;
  border: 2px solid #9a626c;
  border-radius: 50%;
}

/* composer */
.composer {
  position: absolute;
  left: 1079px;
  top: 1336px;
  width: 770px;
  height: 125px;
  padding: 16px 20px 0 17px;
  border-radius: 20px;
  background: linear-gradient(90deg, #1c1a28 var(--split), #f0efeb var(--split)) fixed;
  box-shadow: 0 12px 24px rgba(0, 0, 0, 0.3);
}

.steps {
  width: 709px;
  height: 37px;
  padding-left: 17px;
  display: flex;
  align-items: center;
  border-radius: 19px;
  background: linear-gradient(90deg, #35222e var(--split), #f5e8de var(--split)) fixed;
  font-family: var(--mono);
  font-size: 13.3px;
  white-space: pre;
}

.steps b {
  margin: 0 10px 0 10px;
}

.split-soft {
  background: linear-gradient(90deg, #94858f var(--split), #77717a var(--split)) fixed;
  -webkit-background-clip: text;
  background-clip: text;
  color: transparent;
}

.steps .last {
  margin-left: 8px;
  color: #a09a9f;
}

.chev {
  margin-left: 6px;
  color: #8f8990;
}

.ask {
  height: 38px;
  margin-top: 17px;
  display: flex;
  align-items: center;
}

.spark {
  width: 38px;
  height: 38px;
  display: flex;
  align-items: center;
  justify-content: center;
  border-radius: 11px;
  background: linear-gradient(135deg, #c9a7d4, #e8b4b8 35%);
}

.tag {
  height: 27px;
  margin-left: 10px;
  padding: 0 10px;
  line-height: 26px;
  border-radius: 5px;
  background: #56303a;
  color: #e08a92;
  font-family: var(--mono);
  font-size: 13.4px;
}

.tag.dim {
  background: #412431;
}

.prompt {
  margin-left: 11px;
  font-size: 17px;
  letter-spacing: 0.17px;
  white-space: nowrap;
  background: linear-gradient(90deg, #a09ea9 var(--split), #6b6970 var(--split)) fixed;
  -webkit-background-clip: text;
  background-clip: text;
  color: transparent;
}

.keys {
  margin-left: auto;
  font-family: "DejaVu Sans", sans-serif;
  font-size: 18px;
  color: #96939a;
}

.disclaimer {
  position: absolute;
  left: 1284px;
  top: 1467px;
  font-size: 13.5px;
  line-height: 20px;
  letter-spacing: 0.12px;
  white-space: nowrap;
  color: #807e86;
}
```
